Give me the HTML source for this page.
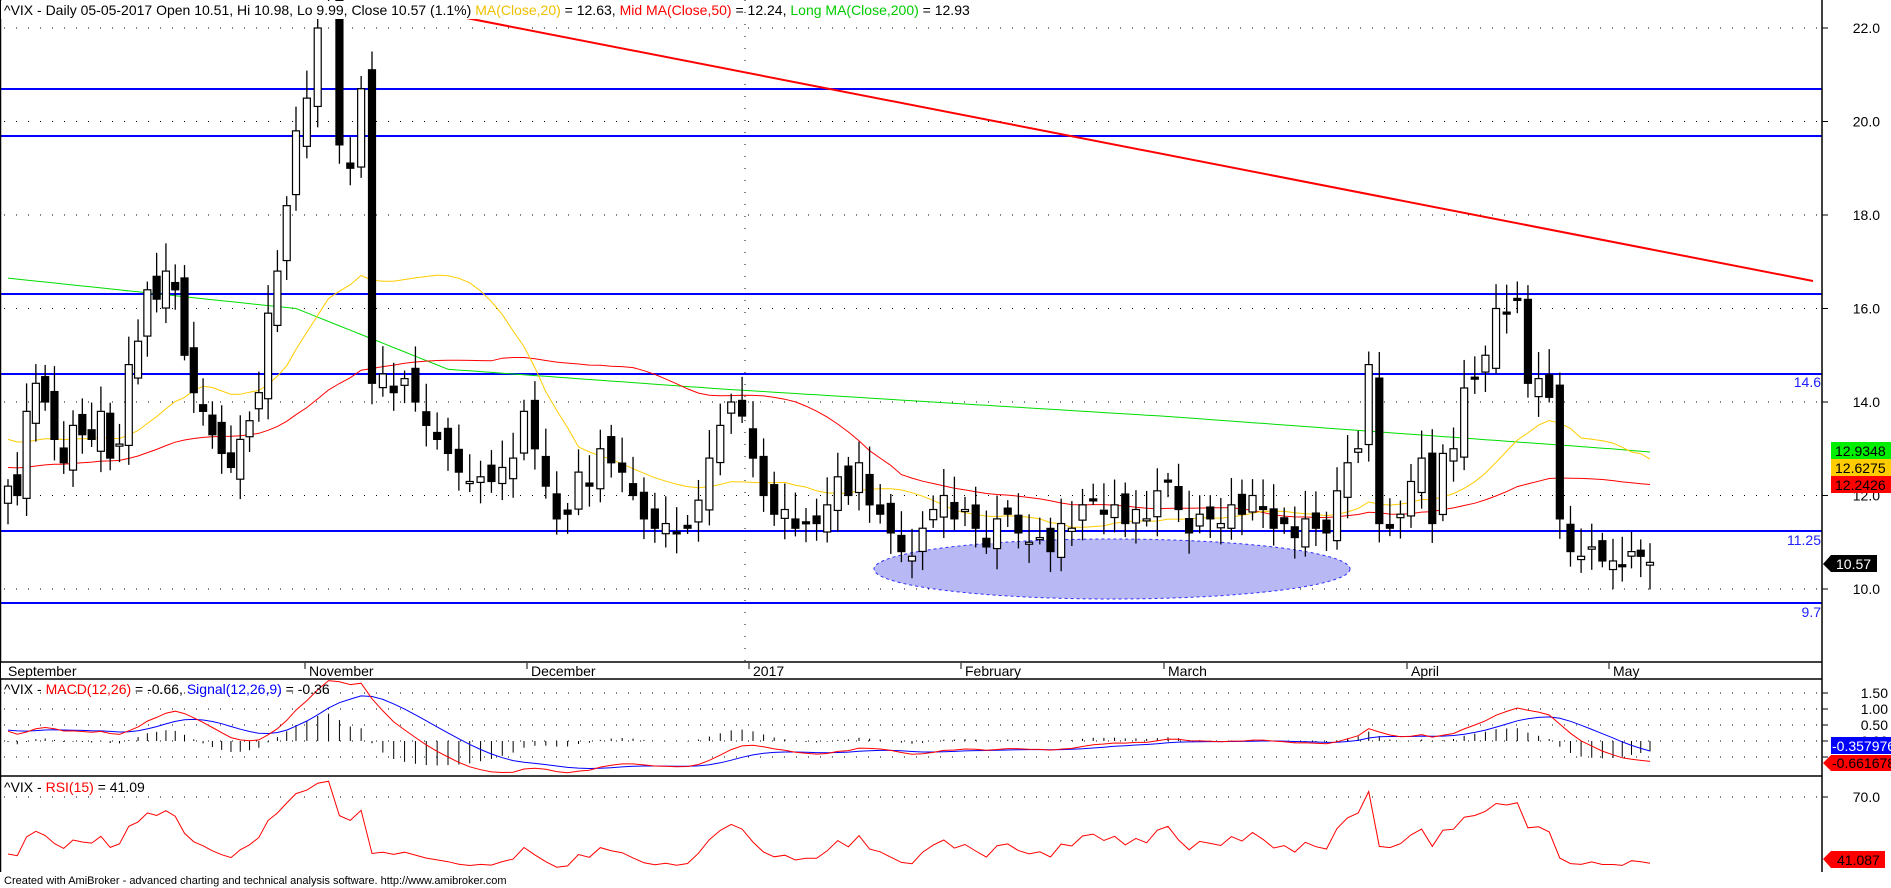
<!DOCTYPE html>
<html><head><meta charset="utf-8">
<style>
html,body{margin:0;padding:0;background:#fff;width:1891px;height:888px;overflow:hidden}
svg{display:block;font-family:"Liberation Sans",Arial,sans-serif}
</style></head>
<body>
<svg id="s" width="1891" height="888" xmlns="http://www.w3.org/2000/svg">
<rect width="1891" height="888" fill="#fff"/>
<g id="grid"></g>
<ellipse cx="1112" cy="569" rx="238" ry="30" fill="#b8b8f4" stroke="#3030ff" stroke-width="1" stroke-dasharray="3,3"/>
<g id="hl" stroke="#0000ff" stroke-width="2">
<line x1="0" y1="89" x2="1822" y2="89"/>
<line x1="0" y1="136" x2="1822" y2="136"/>
<line x1="0" y1="294" x2="1822" y2="294"/>
<line x1="0" y1="374" x2="1822" y2="374"/>
<line x1="0" y1="531" x2="1822" y2="531"/>
<line x1="0" y1="603" x2="1822" y2="603"/>
</g>
<line x1="446" y1="14" x2="1813" y2="281" stroke="#ff0000" stroke-width="2"/>
<g id="plot"></g>
<g font-size="14" fill="#2020ff" text-anchor="end">
<text x="1821" y="387">14.6</text><text x="1821" y="545">11.25</text><text x="1821" y="617">9.7</text>
</g>
<g stroke="#000" stroke-width="1.5" fill="none">
<line x1="1822" y1="0" x2="1822" y2="872"/>
<line x1="0.5" y1="0" x2="0.5" y2="872"/>
<line x1="0" y1="662" x2="1822" y2="662"/>
<line x1="0" y1="679" x2="1822" y2="679"/>
<line x1="0" y1="776" x2="1822" y2="776"/>
</g>
<g id="axis" font-size="14" fill="#000"></g>
<rect x="1" y="663" width="1820" height="15" fill="#fff"/>
<g font-size="14" fill="#000">
<text x="8" y="676">September</text><text x="309" y="676">November</text><text x="531" y="676">December</text>
<text x="753" y="676">2017</text><text x="965" y="676">February</text><text x="1168" y="676">March</text>
<text x="1411" y="676">April</text><text x="1613" y="676">May</text>
</g>
<g stroke="#000"><line x1="305" y1="663" x2="305" y2="669"/><line x1="527" y1="663" x2="527" y2="669"/><line x1="749" y1="663" x2="749" y2="669"/><line x1="961" y1="663" x2="961" y2="669"/><line x1="1164" y1="663" x2="1164" y2="669"/><line x1="1407" y1="663" x2="1407" y2="669"/><line x1="1609" y1="663" x2="1609" y2="669"/></g>
<rect x="1" y="1" width="700" height="18" fill="#fff"/>
<text x="4" y="15" font-size="14"><tspan fill="#000">^VIX - Daily 05-05-2017 Open 10.51, Hi 10.98, Lo 9.99, Close 10.57 (1.1%) </tspan><tspan fill="#f0c000">MA(Close,20)</tspan><tspan fill="#000"> = 12.63, </tspan><tspan fill="#ff0000">Mid MA(Close,50)</tspan><tspan fill="#000"> = 12.24, </tspan><tspan fill="#00cc00">Long MA(Close,200)</tspan><tspan fill="#000"> = 12.93</tspan></text>
<text x="4" y="694" font-size="14"><tspan>^VIX - </tspan><tspan fill="#ff0000">MACD(12,26)</tspan><tspan> = -0.66, </tspan><tspan fill="#0000ff">Signal(12,26,9)</tspan><tspan> = -0.36</tspan></text>
<text x="4" y="792" font-size="14"><tspan>^VIX - </tspan><tspan fill="#ff0000">RSI(15)</tspan><tspan> = 41.09</tspan></text>
<text x="4" y="884" font-size="11">Created with AmiBroker - advanced charting and technical analysis software. http://www.amibroker.com</text>
<rect x="1831" y="442" width="60" height="17" fill="#00ee00"/><text x="1835" y="456" font-size="14">12.9348</text>
<rect x="1831" y="459" width="60" height="17" fill="#ffcc00"/><text x="1835" y="473" font-size="14">12.6275</text>
<rect x="1831" y="476" width="60" height="17" fill="#ff0000"/><text x="1835" y="490" font-size="14">12.2426</text>
<polygon points="1823,564 1831,555 1877,555 1877,572 1831,572" fill="#000"/><text x="1836" y="569" font-size="14" fill="#fff">10.57</text>
<rect x="1831" y="737" width="60" height="17" fill="#0000ff"/><text x="1832" y="751" font-size="14" fill="#fff">-0.357976</text>
<polygon points="1823,763 1831,755 1891,755 1891,771 1831,771" fill="#ff0000"/><text x="1832" y="768" font-size="14">-0.661678</text>
<polygon points="1823,859 1831,851 1885,851 1885,868 1831,868" fill="#ff0000"/><text x="1837" y="865" font-size="14">41.087</text>
</svg>
<script>
var NS="http://www.w3.org/2000/svg";
function el(p,t,a){var e=document.createElementNS(NS,t);for(var k in a)e.setAttribute(k,a[k]);p.appendChild(e);return e;}
var C=[12.2,12.0,13.8,14.4,14.0,13.2,12.7,13.5,13.3,13.2,13.8,12.8,13.1,14.8,15.3,16.4,16.2,16.8,16.4,15.0,14.2,13.8,13.3,12.9,12.6,13.2,13.6,14.2,15.9,16.8,18.2,
19.8,20.5,22.0,22.5,19.5,19.0,20.7,14.4,14.6,14.2,14.5,14.0,13.5,13.2,12.9,12.5,12.3,12.4,12.3,12.6,12.8,
13.8,13.0,12.2,11.5,11.6,12.5,12.2,13.0,12.7,12.5,12.0,11.5,11.3,11.4,11.2,11.3,11.9,12.8,13.5,14.0,13.7,
12.8,12.0,11.6,11.7,11.3,11.4,11.4,11.8,12.4,12.0,12.7,11.8,11.6,11.2,10.8,10.7,11.3,11.7,12.0,11.5,
11.7,11.3,10.9,11.5,11.6,11.2,11.0,11.1,10.8,11.4,11.3,11.8,11.9,11.6,11.8,11.4,11.7,11.5,12.1,
12.3,11.7,11.2,11.6,11.5,11.4,11.8,11.6,12.0,11.7,11.3,11.4,11.1,11.5,11.3,11.2,12.1,12.7,13.0,14.8,11.4,11.3,11.6,
12.3,12.8,11.4,12.9,13.0,14.3,14.5,15.0,16.0,15.9,16.2,14.4,14.5,14.1,11.5,10.8,10.7,10.9,10.6,
10.6,10.5,10.8,10.7,10.57];
var N=C.length;
var AN=[[0,8],[31,296],[52,524],[73,753],[93,965],[112,1168],[135,1411],[154,1613],[N-1,1650]];
function X(i){for(var k=0;k<AN.length-1;k++){if(i<=AN[k+1][0]){var f=(i-AN[k][0])/(AN[k+1][0]-AN[k][0]);return AN[k][1]+f*(AN[k+1][1]-AN[k][1]);}}return 1650;}
function PY(p){return 589-(p-10)*46.75}
var g=document.getElementById('grid'),ax=document.getElementById('axis');
[22,20,18,16,14,12,10].forEach(function(p){var y=PY(p);el(g,'line',{x1:4,y1:y,x2:1822,y2:y,stroke:'#000','stroke-dasharray':'1,11'});el(ax,'line',{x1:1822,y1:y,x2:1828,y2:y,stroke:'#000'});var t=el(ax,'text',{x:1880,y:y+5,'text-anchor':'end'});t.textContent=p.toFixed(1);});
el(g,'line',{x1:745,y1:0,x2:745,y2:662,stroke:'#000','stroke-dasharray':'1,11'});
function MY(v){return 741-v*32}
[1.5,1,0.5,0,-0.5].forEach(function(v){var y=MY(v);el(g,'line',{x1:4,y1:y,x2:1822,y2:y,stroke:'#000','stroke-dasharray':'1,11'});el(ax,'line',{x1:1822,y1:y,x2:1828,y2:y,stroke:'#000'});if(v>=0){var t=el(ax,'text',{x:1888,y:y+5,'text-anchor':'end'});t.textContent=v.toFixed(2);}});
function RY(v){return 797+(70-v)*2.17}
el(g,'line',{x1:4,y1:797,x2:1822,y2:797,stroke:'#000','stroke-dasharray':'1,11'});el(ax,'line',{x1:1822,y1:797,x2:1828,y2:797,stroke:'#000'});
var t=el(ax,'text',{x:1880,y:802,'text-anchor':'end'});t.textContent='70.0';
var P=document.getElementById('plot');
function sma(n){var r=[];for(var i=0;i<N;i++){var s=0,c=0;for(var j=Math.max(0,i-n+1);j<=i;j++){s+=C[j];c++;}r.push(s/c);}return r;}
function line(arr,fy,col,w,fromI){var pts=[];arr.forEach(function(v,i){if(i>=(fromI||0))pts.push(X(i).toFixed(1)+','+fy(v).toFixed(1));});el(P,'polyline',{points:pts.join(' '),fill:'none',stroke:col,'stroke-width':w||1});}
var gr=[[0,16.65],[31,16.0],[45,14.7],[70,14.28],[112,13.69],[N-1,12.93]],G=[];
for(var i=0;i<N;i++){for(var k=0;k<gr.length-1;k++){if(i>=gr[k][0]&&i<=gr[k+1][0]){var f=(i-gr[k][0])/(gr[k+1][0]-gr[k][0]);G.push(gr[k][1]+f*(gr[k+1][1]-gr[k][1]));break;}}}
var m50=sma(50);for(var i=0;i<N;i++)m50[i]=i<50?(12.6*(50-i)+m50[i]*i)/50:m50[i];
var m20=sma(20);for(var i=0;i<N;i++)m20[i]=i<20?(13.2*(20-i)+m20[i]*i)/20:m20[i];
line(G,PY,'#00dd00');line(m50,PY,'#ff0000');line(m20,PY,'#ffcc00');
var prev=C[0]*0.97;
for(var i=0;i<N;i++){var c=C[i],o=prev*(1+0.02*Math.sin(i*1.7));var hi=Math.max(o,c)+0.15+0.45*Math.abs(Math.sin(i*2.3)),lo=Math.min(o,c)-0.1-0.35*Math.abs(Math.cos(i*1.9));
if(i==N-1){o=10.51;hi=10.98;lo=9.99;}
var x=X(i);el(P,'line',{x1:x,y1:PY(hi),x2:x,y2:PY(lo),stroke:'#000','stroke-width':1.3});
var y1=PY(Math.max(o,c)),y2=PY(Math.min(o,c));if(y2-y1<2)y2=y1+2;
el(P,'rect',{x:x-3.5,y:y1,width:7,height:y2-y1,fill:c>=o?'#fff':'#000',stroke:'#000','stroke-width':1.2});prev=c;}
function ema(a,n,seed){var k=2/(n+1),r=[],e=seed;for(var i=0;i<a.length;i++){e=a[i]*k+e*(1-k);r.push(e);}return r;}
var e12=ema(C,12,13.0),e26=ema(C,26,12.6),M=C.map(function(v,i){return e12[i]-e26[i]}),S=ema(M,9,0.35);
for(var i=0;i<N;i++){var h=(M[i]-S[i]);el(P,'line',{x1:X(i),y1:MY(0),x2:X(i),y2:MY(h),stroke:'#000'});}
line(S,MY,'#0000ff');line(M,MY,'#ff0000');
var R=[],ag=0.35,al=0.45,n=15;for(var i=0;i<N;i++){var d=i?C[i]-C[i-1]:0;ag=(ag*(n-1)+Math.max(d,0))/n;al=(al*(n-1)+Math.max(-d,0))/n;R.push(100-100/(1+ag/al));}
line(R,RY,'#ff0000');
</script>
</body></html>
